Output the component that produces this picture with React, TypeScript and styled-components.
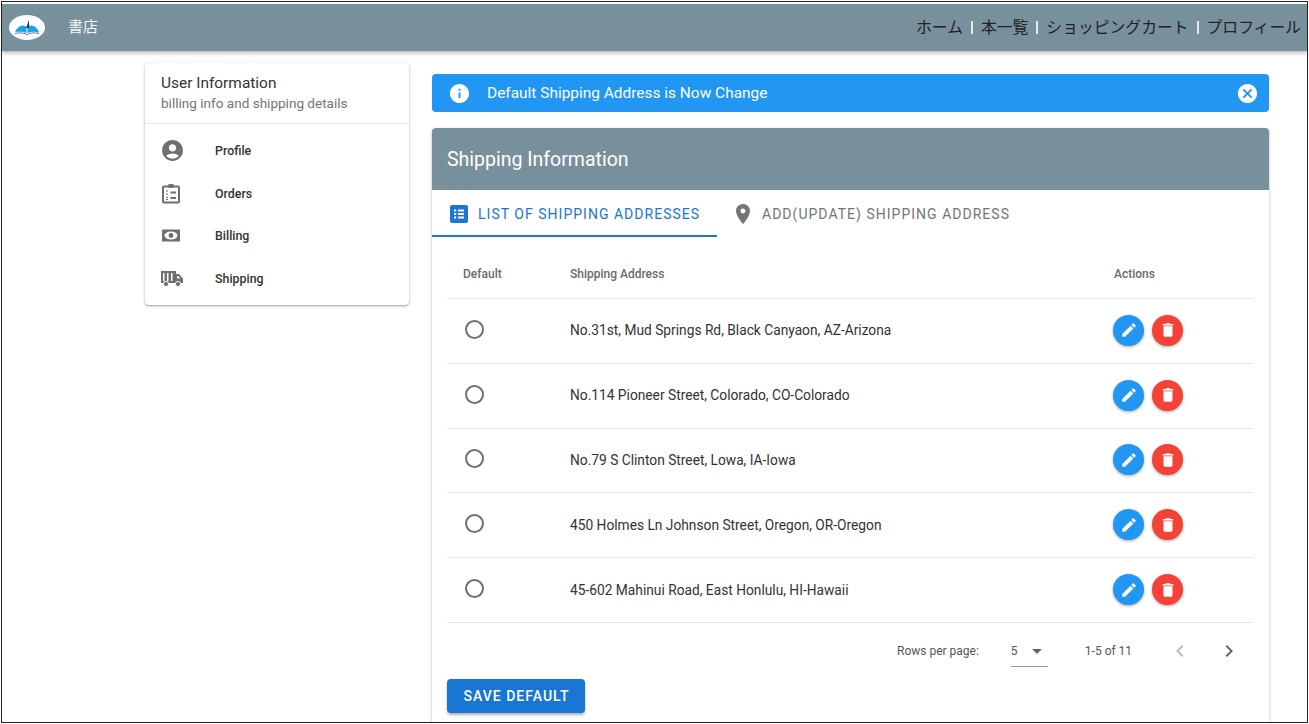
import React from 'react';
import styled, { createGlobalStyle } from 'styled-components';
import {
    MdAccountCircle,
    MdCancel,
    MdChevronLeft,
    MdChevronRight,
    MdDelete,
    MdEdit,
    MdInfo,
    MdPlace,
} from 'react-icons/md';

const COLORS = {
    slate: '#78909c',
    blue: '#2196f3',
    darkBlue: '#1976d2',
    red: '#f44336',
    line: '#e8e8e8',
    text: '#333',
    muted: '#757575',
};

const GlobalStyle = createGlobalStyle`
html, body {
    margin: 0;
    padding: 0;
    background: white;
}

body {
    font-family: Roboto, "Noto Sans CJK JP", sans-serif;
    color: ${COLORS.text};
}
`;

const Frame = styled.div`
    box-sizing: border-box;
    width: 1307px;
    height: 722px;
    margin: 1px;
    border: 1px solid #222;
    overflow: hidden;
    padding-top: 2px;
    background: white;
`;
const Header = styled.header`
    height: 47px;
    background: ${COLORS.slate};
    box-shadow: 0 2px 4px rgba(0, 0, 0, 0.3);
    display: flex;
    align-items: center;
    padding: 0 6px 4px 7px;
    box-sizing: border-box;
    position: relative;
`;
const LogoOval = styled.div`
    width: 36px;
    height: 25px;
    border-radius: 50%;
    background: white;
    display: flex;
    align-items: center;
    justify-content: center;
    margin-top: 4px;
`;
const Brand = styled.div`
    color: #f2f4f5;
    font-size: 15px;
    margin-left: 23px;
    font-family: "Noto Sans CJK JP", sans-serif;
`;
const Nav = styled.nav`
    margin-left: auto;
    margin-top: 2px;
    display: flex;
    align-items: center;
    font-size: 15.8px;
    color: #222;
    font-family: "Noto Sans CJK JP", sans-serif;
`;
const NavSep = styled.span`
    width: 2px;
    height: 13px;
    background: #e4e8ea;
    margin: 2px 8px 0 8px;
`;
const Body = styled.div`
    display: flex;
    align-items: flex-start;
    padding-left: 143px;
`;
const Sidebar = styled.aside`
    width: 264px;
    height: 242px;
    margin-top: 12px;
    background: white;
    border-radius: 4px;
    box-shadow: 0 1px 3px rgba(0, 0, 0, 0.3), 0 1px 1px rgba(0, 0, 0, 0.12);
`;
const SideHead = styled.div`
    height: 61px;
    box-sizing: border-box;
    padding: 10px 16px 0;
    border-bottom: 1px solid ${COLORS.line};
`;
const SideTitle = styled.div`
    font-size: 15.45px;
    line-height: 20px;
    margin-bottom: 1px;
`;
const SideSub = styled.div`
    font-size: 13.55px;
    line-height: 19px;
    color: ${COLORS.muted};
`;
const SideList = styled.div`
    padding-top: 5px;
`;
const SideRow = styled.div`
    height: 42.7px;
    display: flex;
    align-items: center;
    color: #6f6f6f;
    padding-left: 16px;
`;
const SideIcon = styled.div`
    width: 54px;
    display: flex;
    align-items: center;
`;
const SideLabel = styled.span`
    font-size: 12.4px;
    font-weight: 500;
    color: #333;
`;
const Main = styled.main`
    width: 837px;
    margin-left: 23px;
    margin-top: 23px;
`;
const Alert = styled.div`
    height: 38px;
    background: ${COLORS.blue};
    border-radius: 4px;
    color: white;
    display: flex;
    align-items: center;
    padding: 0 10px 0 16px;
    font-size: 15.45px;
    margin-bottom: 16px;
`;
const AlertText = styled.span`
    margin-left: 16px;
    flex: 1;
`;
const Card = styled.section`
    background: white;
    border-radius: 4px 4px 0 0;
    box-shadow: 0 1px 3px rgba(0, 0, 0, 0.3);
    padding-bottom: 60px;
`;
const CardHead = styled.div`
    height: 62px;
    background: ${COLORS.slate};
    border-radius: 4px 4px 0 0;
    color: white;
    font-size: 19.5px;
    display: flex;
    align-items: center;
    padding-left: 15px;
`;
const Tabs = styled.div`
    display: flex;
    height: 47px;
`;
const Tab = styled.div<{ $active?: boolean }>`
    width: ${(p) => (p.$active ? '285px' : 'auto')};
    box-sizing: border-box;
    display: flex;
    align-items: center;
    gap: ${(p) => (p.$active ? '10px' : '7px')};
    padding-left: ${(p) => (p.$active ? '18px' : '14px')};
    padding-top: ${(p) => (p.$active ? '3px' : '1px')};
    font-size: 14px;
    letter-spacing: 1.02px;
    color: ${(p) => (p.$active ? COLORS.darkBlue : '#757575')};
    border-bottom: ${(p) => (p.$active ? `2px solid ${COLORS.darkBlue}` : 'none')};
`;
const TableWrap = styled.div`
    padding: 13px 16px 0 15px;
`;
const Row = styled.div<{ $head?: boolean }>`
    display: grid;
    grid-template-columns: 123px 544px 1fr;
    align-items: center;
    height: ${(p) => (p.$head ? '48px' : '63.8px')};
    border-bottom: 1px solid ${COLORS.line};
`;
const HeadCell = styled.div<{ $first?: boolean }>`
    font-size: 12px;
    font-weight: 500;
    color: #6b6b6b;
    padding-left: ${(p) => (p.$first ? '16px' : '0')};
`;
const RadioCell = styled.div`
    padding-left: 18px;
    margin-top: -3px;
`;
const Radio = styled.div`
    width: 15px;
    height: 15px;
    border: 2px solid #6f6f6f;
    border-radius: 50%;
`;
const AddressCell = styled.div`
    font-size: 13.75px;
    margin-top: -1px;
`;
const Actions = styled.div`
    display: flex;
    gap: 8px;
    margin: -1px 0 0 -1px;
`;
const RoundButton = styled.div<{ $color: string }>`
    width: 31px;
    height: 31px;
    border-radius: 50%;
    background: ${(p) => p.$color};
    color: white;
    display: flex;
    align-items: center;
    justify-content: center;
    box-shadow: 0 1px 3px rgba(0, 0, 0, 0.35);
`;
const Pager = styled.div`
    height: 56px;
    display: flex;
    align-items: center;
    font-size: 12px;
    color: #555;
    padding-left: 450px;
`;
const RowsSelect = styled.div`
    width: 37px;
    height: 30px;
    margin-left: 32px;
    display: flex;
    align-items: center;
    justify-content: space-between;
    border-bottom: 1px solid #999;
    box-sizing: border-box;
    padding-right: 6px;
    position: relative;
    top: 1px;
`;
const Caret = styled.span`
    width: 0;
    height: 0;
    border: 5px solid transparent;
    border-top-color: #666;
    border-bottom: none;
`;
const PageText = styled.span`
    margin-left: 37px;
`;
const PageButtons = styled.div`
    margin-left: 36px;
    display: flex;
    gap: 25px;
    align-items: center;
`;
const SaveButton = styled.div`
    width: 138px;
    height: 34px;
    box-sizing: border-box;
    padding: 1px 0 0 1px;
    margin-left: 15px;
    background: ${COLORS.darkBlue};
    border-radius: 4px;
    color: white;
    font-size: 14px;
    font-weight: 500;
    letter-spacing: 1px;
    display: flex;
    align-items: center;
    justify-content: center;
    box-shadow: 0 2px 3px rgba(0, 0, 0, 0.3);
`;

const BookLogo = () => (
    <svg width="26" height="17" viewBox="0 0 26 17">
        <path d="M1 13 C4 7 8 5 12.5 8 L12.5 14 C9 12.5 5 12.5 1 13 Z" fill="#1ba3e8" />
        <path d="M25 13 C22 7 18 5 13.5 8 L13.5 14 C17 12.5 21 12.5 25 13.5 Z" fill="#1ba3e8" />
        <path d="M1 14.5 C5 13.5 9 13.5 13 15.5 C17 13.5 21 13.5 25 14.5" fill="none" stroke="#7a6fc0" strokeWidth="1" />
        <path d="M12 9 L15 1 L15 9 Z" fill="#2a2a80" />
    </svg>
);

const OrdersIcon = () => (
    <svg width="20" height="21" viewBox="0 0 20 21" fill="none" stroke="currentColor">
        <rect x="2" y="3.5" width="16" height="16" rx="1" strokeWidth="2" />
        <rect x="7" y="1" width="6" height="4" rx="1.5" fill="currentColor" stroke="none" />
        <path d="M5 8 H7 M5 11 H7 M5 14.5 H7 M5 16.5 H7" strokeWidth="1.2" />
        <path d="M9.5 9.5 H15 M9.5 15 H15" strokeWidth="2" />
    </svg>
);

const BillIcon = () => (
    <svg width="20" height="13" viewBox="0 0 20 13">
        <rect x="1" y="0.5" width="18" height="12" rx="0.5" fill="currentColor" />
        <ellipse cx="10" cy="6.5" rx="6.5" ry="4" fill="white" />
        <circle cx="10" cy="6.5" r="2.4" fill="currentColor" />
    </svg>
);

const TruckIcon = () => (
    <svg width="22" height="17" viewBox="0 0 22 17" fill="currentColor">
        <path fillRule="evenodd" d="M0 1 H15 V4 H18 L22 8.5 V13 H0 Z M2 3 V11 H3.5 V3 Z M6 3 V11 H7.5 V3 Z M10 3 V11 H11.5 V3 Z M16 6 V8.5 H19.5 L17.5 6 Z" />
        <circle cx="5" cy="14" r="2.6" stroke="white" strokeWidth="1" />
        <circle cx="17" cy="14" r="2.6" stroke="white" strokeWidth="1" />
    </svg>
);

const ListIcon = () => (
    <svg width="18" height="18" viewBox="0 0 18 18">
        <rect width="18" height="18" rx="2" fill="currentColor" />
        <path d="M4 4.5 H6.2 V6.5 H4 Z M4 8 H6.2 V10 H4 Z M4 11.5 H6.2 V13.5 H4 Z M8 4.5 H14 V6.5 H8 Z M8 8 H14 V10 H8 Z M8 11.5 H14 V13.5 H8 Z" fill="white" />
    </svg>
);

const addresses = [
    'No.31st, Mud Springs Rd, Black Canyaon, AZ-Arizona',
    'No.114 Pioneer Street, Colorado, CO-Colorado',
    'No.79 S Clinton Street, Lowa, IA-Iowa',
    '450 Holmes Ln Johnson Street, Oregon, OR-Oregon',
    '45-602 Mahinui Road, East Honlulu, HI-Hawaii',
];

const sideItems = [
    { label: 'Profile', icon: <MdAccountCircle size={25} style={{ marginLeft: -1 }} /> },
    { label: 'Orders', icon: <OrdersIcon /> },
    { label: 'Billing', icon: <BillIcon /> },
    { label: 'Shipping', icon: <TruckIcon /> },
];

const navItems = ['ホーム', '本一覧', 'ショッピングカート', 'プロフィール'];

export default function App() {
    return (
        <Frame>
            <GlobalStyle />
            <Header>
                <LogoOval>
                    <BookLogo />
                </LogoOval>
                <Brand>書店</Brand>
                <Nav>
                    {navItems.map((item, i) => (
                        <React.Fragment key={item}>
                            {i > 0 && <NavSep />}
                            <span>{item}</span>
                        </React.Fragment>
                    ))}
                </Nav>
            </Header>
            <Body>
                <Sidebar>
                    <SideHead>
                        <SideTitle>User Information</SideTitle>
                        <SideSub>billing info and shipping details</SideSub>
                    </SideHead>
                    <SideList>
                        {sideItems.map((item) => (
                            <SideRow key={item.label}>
                                <SideIcon>{item.icon}</SideIcon>
                                <SideLabel>{item.label}</SideLabel>
                            </SideRow>
                        ))}
                    </SideList>
                </Sidebar>
                <Main>
                    <Alert>
                        <MdInfo size={23} />
                        <AlertText>Default Shipping Address is Now Change</AlertText>
                        <MdCancel size={23} />
                    </Alert>
                    <Card>
                        <CardHead>Shipping Information</CardHead>
                        <Tabs>
                            <Tab $active>
                                <ListIcon />
                                LIST OF SHIPPING ADDRESSES
                            </Tab>
                            <Tab>
                                <MdPlace size={24} />
                                ADD(UPDATE) SHIPPING ADDRESS
                            </Tab>
                        </Tabs>
                        <TableWrap>
                            <Row $head>
                                <HeadCell $first>Default</HeadCell>
                                <HeadCell>Shipping Address</HeadCell>
                                <HeadCell>Actions</HeadCell>
                            </Row>
                            {addresses.map((address) => (
                                <Row key={address}>
                                    <RadioCell>
                                        <Radio />
                                    </RadioCell>
                                    <AddressCell>{address}</AddressCell>
                                    <Actions>
                                        <RoundButton $color={COLORS.blue}>
                                            <MdEdit size={18} />
                                        </RoundButton>
                                        <RoundButton $color={COLORS.red}>
                                            <MdDelete size={18} />
                                        </RoundButton>
                                    </Actions>
                                </Row>
                            ))}
                            <Pager>
                                Rows per page:
                                <RowsSelect>
                                    5
                                    <Caret />
                                </RowsSelect>
                                <PageText>1-5 of 11</PageText>
                                <PageButtons>
                                    <MdChevronLeft size={24} color="#bdbdbd" />
                                    <MdChevronRight size={24} color="#666" />
                                </PageButtons>
                            </Pager>
                        </TableWrap>
                        <SaveButton>SAVE DEFAULT</SaveButton>
                    </Card>
                </Main>
            </Body>
        </Frame>
    );
}
